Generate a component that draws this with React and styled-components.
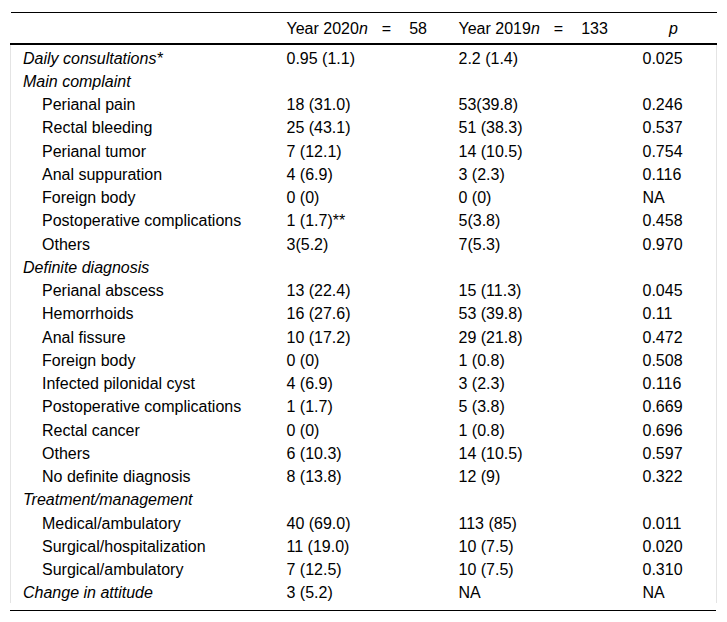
import React from 'react';
import styled, { createGlobalStyle } from 'styled-components';

const GlobalStyle = createGlobalStyle`
  body {
    margin: 0;
    background: #fff;
    font-family: "Liberation Sans", Arial, sans-serif;
    color: #000;
  }
`;

const Wrapper = styled.div`
  margin: 12px 11px 0 10px;
  padding-bottom: 7px;
  border-bottom: 1px solid #000;
`;

const Table = styled.table`
  width: 706px;
  border-collapse: collapse;
  table-layout: fixed;
  font-size: 16px;
  line-height: 17px;
`;

const HeadRow = styled.tr`
  border-top: 1px solid #000;
  border-bottom: 2px solid #000;
`;

const HeadCell = styled.th`
  font-weight: normal;
  text-align: ${(p) => (p.$center ? 'center' : 'left')};
  padding: 7.2px 12px 5.8px;
  white-space: nowrap;
`;

const Body = styled.tbody`
  border-left: 1px solid #e4e4e4;
  border-right: 1px solid #e4e4e4;
`;

const Cell = styled.td`
  padding: 4.6px 12px 1.66px;
  padding-left: ${(p) => (p.$indent ? '31px' : '12px')};
  font-style: ${(p) => (p.$italic ? 'italic' : 'normal')};
  white-space: nowrap;
`;

const Eq = styled.span`
  margin: 0 18px 0 14px;
`;

const rows = [
  { label: 'Daily consultations*', italic: true, v: ['0.95 (1.1)', '2.2 (1.4)', '0.025'] },
  { label: 'Main complaint', italic: true },
  { label: 'Perianal pain', v: ['18 (31.0)', '53(39.8)', '0.246'] },
  { label: 'Rectal bleeding', v: ['25 (43.1)', '51 (38.3)', '0.537'] },
  { label: 'Perianal tumor', v: ['7 (12.1)', '14 (10.5)', '0.754'] },
  { label: 'Anal suppuration', v: ['4 (6.9)', '3 (2.3)', '0.116'] },
  { label: 'Foreign body', v: ['0 (0)', '0 (0)', 'NA'] },
  { label: 'Postoperative complications', v: ['1 (1.7)**', '5(3.8)', '0.458'] },
  { label: 'Others', v: ['3(5.2)', '7(5.3)', '0.970'] },
  { label: 'Definite diagnosis', italic: true },
  { label: 'Perianal abscess', v: ['13 (22.4)', '15 (11.3)', '0.045'] },
  { label: 'Hemorrhoids', v: ['16 (27.6)', '53 (39.8)', '0.11'] },
  { label: 'Anal fissure', v: ['10 (17.2)', '29 (21.8)', '0.472'] },
  { label: 'Foreign body', v: ['0 (0)', '1 (0.8)', '0.508'] },
  { label: 'Infected pilonidal cyst', v: ['4 (6.9)', '3 (2.3)', '0.116'] },
  { label: 'Postoperative complications', v: ['1 (1.7)', '5 (3.8)', '0.669'] },
  { label: 'Rectal cancer', v: ['0 (0)', '1 (0.8)', '0.696'] },
  { label: 'Others', v: ['6 (10.3)', '14 (10.5)', '0.597'] },
  { label: 'No definite diagnosis', v: ['8 (13.8)', '12 (9)', '0.322'] },
  { label: 'Treatment/management', italic: true },
  { label: 'Medical/ambulatory', v: ['40 (69.0)', '113 (85)', '0.011'] },
  { label: 'Surgical/hospitalization', v: ['11 (19.0)', '10 (7.5)', '0.020'] },
  { label: 'Surgical/ambulatory', v: ['7 (12.5)', '10 (7.5)', '0.310'] },
  { label: 'Change in attitude', italic: true, v: ['3 (5.2)', 'NA', 'NA'] },
];

export default function App() {
  return (
    <>
      <GlobalStyle />
      <Wrapper>
        <Table>
          <colgroup>
            <col style={{ width: 264 }} />
            <col style={{ width: 172 }} />
            <col style={{ width: 184 }} />
            <col style={{ width: 86 }} />
          </colgroup>
          <thead>
            <HeadRow>
              <HeadCell />
              <HeadCell>
                Year 2020<i>n</i><Eq>=</Eq>58
              </HeadCell>
              <HeadCell>
                Year 2019<i>n</i><Eq>=</Eq>133
              </HeadCell>
              <HeadCell $center>
                <i>p</i>
              </HeadCell>
            </HeadRow>
          </thead>
          <Body>
            {rows.map((r, i) => (
              <tr key={i}>
                <Cell $italic={r.italic} $indent={!r.italic}>{r.label}</Cell>
                <Cell>{r.v ? r.v[0] : ''}</Cell>
                <Cell>{r.v ? r.v[1] : ''}</Cell>
                <Cell>{r.v ? r.v[2] : ''}</Cell>
              </tr>
            ))}
          </Body>
        </Table>
      </Wrapper>
    </>
  );
}
